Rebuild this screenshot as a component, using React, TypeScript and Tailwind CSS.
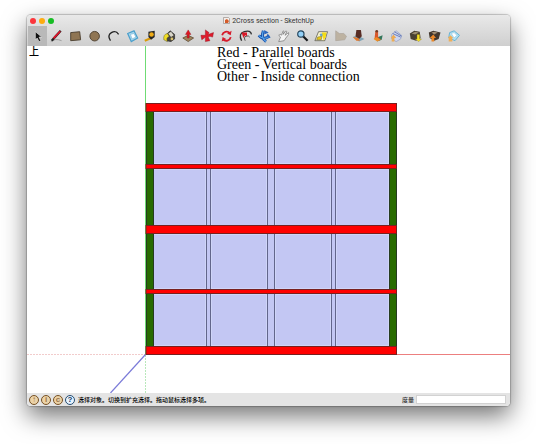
import type { ReactNode } from "react";

type Tool = { name: string; art: ReactNode };

const tools: Tool[] = [
  { name: "Select", art: <path d="M6 3v9l2-2 2 4 2-1-2-4h3z" fill="#111" stroke="#eee" strokeWidth=".6" /> },
  {
    name: "Pencil",
    art: (
      <>
        <path d="M2 14q5-4 12-1" fill="none" stroke="#999" />
        <path d="M3 13 13 2" stroke="#222" strokeWidth="2.6" />
        <path d="M5 10.500 12.500 2.500" stroke="#e0142b" strokeWidth="2" />
      </>
    ),
  },
  { name: "Rectangle", art: <path d="m3 4 10-1 1 9-11 1z" fill="#8f7553" stroke="#493d2e" /> },
  { name: "Circle", art: <circle cx="8.5" cy="8" r="5.3" fill="#8f7553" stroke="#493d2e" /> },
  { name: "Arc", art: <path d="M5 13Q1 7 6 4t8 2" fill="none" stroke="#222" strokeWidth="1.5" /> },
  {
    name: "Make Component",
    art: (
      <>
        <path d="m3 5 7-3 4 8-7 4z" fill="#a9d6ec" stroke="#4da0cc" strokeWidth="1.4" />
        <path d="m6 6 4-1 2 4-4 2z" fill="#fff" stroke="#6ab0d4" strokeWidth=".6" />
      </>
    ),
  },
  {
    name: "Tape Measure",
    art: (
      <>
        <path d="m2 13 7-3" stroke="#d99a09" strokeWidth="2.5" />
        <path d="m6 3 7-1v7l-4 3-3-3z" fill="#252525" />
        <circle cx="9.5" cy="6" r="2.5" fill="#f0ac16" />
      </>
    ),
  },
  {
    name: "Paint Bucket",
    art: (
      <>
        <path d="m5 6 4-4 5 4 0 5-4 3-5-1z" fill="#49463f" stroke="#222" strokeWidth=".7" />
        <path d="m7 5 3-2 3 4-3 2z" fill="#d9d6ca" />
        <path d="M6 5Q1 6 2 12l4 2q-2-4 2-6z" fill="#efdc26" stroke="#57511d" strokeWidth=".5" />
        <circle cx="11" cy="11" r="1.5" fill="#d9c16b" />
      </>
    ),
  },
  {
    name: "Push/Pull",
    art: (
      <>
        <path d="m2 10 6-3 6 3-6 4z" fill="#a1835c" stroke="#54412b" strokeWidth=".8" />
        <path d="M7 10V6H5l3-5 3 5H9v4z" fill="#e11622" stroke="#96121b" strokeWidth=".5" />
      </>
    ),
  },
  {
    name: "Move",
    art: (
      <path
        d="m6 1 4 3-1 2 3-1 3-1-1 5-3-1-2 1 2 4-5 1 0-5-4 3-1-5 5 0z"
        fill="#e01b2c"
        stroke="#911320"
        strokeWidth=".5"
      />
    ),
  },
  {
    name: "Rotate",
    art: (
      <>
        <path d="M3.5 7A5 5 0 0 1 12 4.500M13 9a5 5 0 0 1-8.500 2.500" fill="none" stroke="#d61c2c" strokeWidth="2" />
        <path d="m14 2-1 5-4-2zM3 14l1-5 4 2z" fill="#d61c2c" />
      </>
    ),
  },
  {
    name: "Offset",
    art: (
      <>
        <path d="M4 13Q0 5 7 3t8 3" fill="none" stroke="#333" strokeWidth="1.5" />
        <path d="M8 13Q6 9 9 8t4 1" fill="none" stroke="#444" />
        <path d="m4 4 6 0 0 4-2-1-2 3z" fill="#d81727" />
      </>
    ),
  },
  {
    name: "Orbit",
    art: (
      <>
        <path d="M2 7q5 6 12 1M7 2q-3 8 3 12" fill="none" stroke="#174ea6" strokeWidth="3.2" />
        <path d="M2 7q5 6 12 1M7 2q-3 8 3 12" fill="none" stroke="#57a5ed" strokeWidth="1.300" />
        <path d="m8 1 5 3-5 2zM12 5l3 5-5-1z" fill="#2a66bd" />
      </>
    ),
  },
  {
    name: "Pan",
    art: (
      <path
        d="m3 14 2-5-2-2 2-1 1 1 2-5 1 1-1 3 3-4 1 1-2 4 4-3 0 2-3 4-2 3z"
        fill="#f3f3f3"
        stroke="#777"
        strokeWidth=".8"
      />
    ),
  },
  {
    name: "Zoom",
    art: (
      <>
        <path d="m9 8 5 5" stroke="#18191b" strokeWidth="2.4" />
        <circle cx="6.5" cy="5.5" r="3.500" fill="#93d0f7" stroke="#26465d" strokeWidth="1.300" />
      </>
    ),
  },
  {
    name: "Zoom Extents",
    art: (
      <>
        <path d="M5 3h10l-3 10H1z" fill="#f7f3cc" stroke="#3c3b34" strokeWidth=".7" />
        <path d="M9 4h5l-1 4H8z" fill="#f3dc16" />
        <path d="m4 9 5-1-1 4H3z" fill="#e8c713" stroke="#5d5936" strokeWidth=".5" />
        <path d="M10 7h3v3h-1l-1 3-1-3z" fill="#f8df16" />
        <circle cx="8" cy="6.500" r="1.600" fill="#68a8cd" />
      </>
    ),
  },
  {
    name: "Previous",
    art: <path d="m3 2 4 3 5 0 3 3-2 4-10 1z" fill="#bdb2a1" stroke="#aaa399" strokeWidth=".7" />,
  },
  {
    name: "Position Camera",
    art: (
      <>
        <path d="m2 9 5-2 8 4-6 3z" fill="#7fa3b5" />
        <path d="M6 1h5l1 7-3 3-4-3z" fill="#572c24" />
        <path d="m2 9 6 1 2 3H6z" fill="#e1782d" />
      </>
    ),
  },
  {
    name: "Walk",
    art: (
      <>
        <path d="m9 9 5-2-1 5-5 2z" fill="#32765a" />
        <path d="m6 2 3 0 0 7 3 3-3 1-4-2z" fill="#d8572b" />
        <path d="m7 9 5 3-4 2-4-3z" fill="#ec8c25" />
        <circle cx="7.500" cy="2.500" r="1.400" fill="#713c28" />
      </>
    ),
  },
  {
    name: "Section Plane",
    art: (
      <>
        <path d="m3 6 5-4 6 5-1 4-5 3-5-3z" fill="#cdd6f0" stroke="#8b98c1" strokeWidth=".7" />
        <path d="m4 5 9 4M6 3l8 5" stroke="#6376b1" />
        <path d="m2 10 3-4 3 4H6v4H3v-4z" fill="#edac55" />
      </>
    ),
  },
  {
    name: "Get Models",
    art: (
      <>
        <path d="m2 5 5-3 6 1 1 7-5 3-6-2z" fill="#484033" />
        <path d="m4 5 4-2 4 1-4 2z" fill="#9c8e72" />
        <path d="M10 6h3v5h2l-3 3-4-3h2z" fill="#f4df24" stroke="#81711d" strokeWidth=".4" />
      </>
    ),
  },
  {
    name: "Share Model",
    art: (
      <>
        <path d="m2 4 5-2 8 2-2 7-5 2-5-3z" fill="#41362d" />
        <path d="m5 4 3-1 4 1-4 2z" fill="#a08b70" />
        <path d="m3 10 4-4 3 4H8v4H5v-4z" fill="#e98728" />
      </>
    ),
  },
  {
    name: "Share Component",
    art: (
      <>
        <path d="m4 4 5-2 6 5-5 6-7-3z" fill="#b0dff2" stroke="#60afd1" />
        <path d="m6 5 3-1 3 3-3 3z" fill="#fff" stroke="#8ec6dd" strokeWidth=".6" />
        <path d="m2 10 3-3 3 3H7v4H3v-4z" fill="#edae59" />
      </>
    ),
  },
];

const cellRows = [
  { y: 111, height: 53 },
  { y: 168, height: 58 },
  { y: 233, height: 56 },
  { y: 293, height: 53 },
];
const cellColumns = [
  { x: 153, width: 53 },
  { x: 211, width: 56 },
  { x: 275, width: 56 },
  { x: 336, width: 53 },
];
const uprights = [206.5, 210.5, 267.5, 274.5, 331.5, 335.5];
const shelves = [
  { y: 104, height: 7 },
  { y: 165, height: 3 },
  { y: 226, height: 7 },
  { y: 290, height: 3 },
  { y: 347, height: 7 },
];

function Model() {
  return (
    <svg viewBox="27 46 483 347" className="block w-full" role="img" aria-label="Cross section of a shelf">
      <path d="M145.5 46v308" stroke="#6fdc74" />
      <path d="M145.5 355v38" stroke="#b9e8bb" strokeDasharray="2 1" />
      <path d="M27 354.500h119" stroke="#f2cccc" strokeDasharray="2 1" />
      <path d="M396 354.500h114" stroke="#ec7f7f" />
      <path d="m145.500 354.500-35 38.500" stroke="#7a7ad8" strokeWidth="1.2" />
      <path d="M146 104h250v250H146z" fill="#c3c7f3" />
      {cellRows.map((row) =>
        cellColumns.map((col) => (
          <rect
            key={`${row.y}-${col.x}`}
            x={col.x + 0.5}
            y={row.y + 1.5}
            width={col.width - 1}
            height={row.height - 2}
            fill="#c3c7f3"
            stroke="#cfd5f8"
          />
        )),
      )}
      {uprights.map((x) => (
        <path key={x} d={`M${x} 111v236`} stroke="#62668b" />
      ))}
      <path d="M146.500 111h7v236h-7zM389.500 111h7v236h-7z" fill="#286b00" stroke="#263c20" />
      {shelves.map((shelf) => (
        <rect
          key={shelf.y}
          x="146"
          y={shelf.y - 0.5}
          width="250.5"
          height={shelf.height + 1}
          fill="#ff0000"
          stroke="#782020"
        />
      ))}
    </svg>
  );
}

function StatusIcon({ mark, label, help = false }: { mark: string; label: string; help?: boolean }) {
  return (
    <button
      aria-label={label}
      className={`flex size-[10px] items-center justify-center rounded-full border text-[8px] leading-none font-bold ${
        help ? "border-[#244c70] bg-[#e7f3ff] text-[#163a5f]" : "border-[#765126] bg-[#ecd3a8] text-[#98734b]"
      }`}
    >
      {mark}
    </button>
  );
}

export default function App() {
  return (
    <div className="bg-white pt-[15px] pr-[26px] pb-[38px] pl-[27px] font-['Liberation_Sans','Noto_Sans_CJK_SC',sans-serif] text-black">
      <main className="overflow-hidden rounded-[4px] bg-white shadow-[0_0_1px_1px_rgba(0,0,0,0.2),0_10px_24px_rgba(0,0,0,0.55)]">
        <header className="bg-linear-to-b from-[#e9e9e9] to-[#cfcfcf]">
          <div className="grid h-[11px] grid-cols-[1fr_auto_1fr] items-center px-[3px]">
            <div className="flex gap-[3px]">
              <button aria-label="Close" className="size-[6px] rounded-full bg-[#fc353b]" />
              <button aria-label="Minimize" className="size-[6px] rounded-full bg-[#fdac10]" />
              <button aria-label="Full screen" className="size-[6px] rounded-full bg-[#17bd24]" />
            </div>
            <div className="flex items-center gap-[2px]">
              <svg viewBox="0 0 7 7" className="size-[7px]" aria-hidden="true">
                <path d="M.5.5h5l1 1v5h-6z" fill="#f4eee9" stroke="#8b827d" strokeWidth=".6" />
                <path d="m2 3 2-1 2 2-1 2H2z" fill="#d45b29" />
              </svg>
              <h1 className="font-[Roboto,sans-serif] text-[7px] leading-[10px] whitespace-nowrap text-[#333]">
                2Cross section - SketchUp
              </h1>
            </div>
          </div>
          <nav
            aria-label="Tools"
            className="ml-px grid h-5 max-w-[435px] grid-cols-[repeat(23,minmax(0,1fr))] items-stretch"
          >
            {tools.map((tool, index) => (
              <button
                key={tool.name}
                aria-label={tool.name}
                aria-pressed={index === 0}
                className="flex items-center justify-center pb-px aria-pressed:bg-[#b9b9b9]"
              >
                <svg viewBox="1 0 15 16" className="h-4 w-[15px]" aria-hidden="true">
                  <g transform="translate(1 1) scale(.9)">{tool.art}</g>
                </svg>
              </button>
            ))}
          </nav>
        </header>
        <section className="relative">
          <Model />
          <span className="absolute top-0 left-[2px] text-[10px] leading-3 font-medium">上</span>
          <p className="absolute top-px left-[190px] font-['Liberation_Serif',serif] text-[14px] leading-3 whitespace-pre">
            {"Red - Parallel boards\nGreen - Vertical boards\nOther - Inside connection"}
          </p>
        </section>
        <footer className="flex h-[13px] items-center bg-[#e4e4e4] pr-1 pl-[2px]">
          <div className="flex gap-[2px]">
            <StatusIcon mark="↑" label="Geolocation" />
            <StatusIcon mark="i" label="Credits" />
            <StatusIcon mark="c" label="Claim credit" />
            <StatusIcon mark="?" label="Help" help />
          </div>
          <p className="ml-[3px] text-[6px] leading-3 font-medium whitespace-nowrap">
            选择对象。切换到扩充选择。拖动鼠标选择多项。
          </p>
          <label htmlFor="measurement" className="ml-auto text-[6px] leading-3 font-medium text-[#333]">
            度量
          </label>
          <input
            id="measurement"
            type="text"
            className="ml-[2px] h-[9px] w-[90px] border border-[#d2d2d2] bg-white px-px text-[6px] outline-none"
          />
        </footer>
      </main>
    </div>
  );
}
